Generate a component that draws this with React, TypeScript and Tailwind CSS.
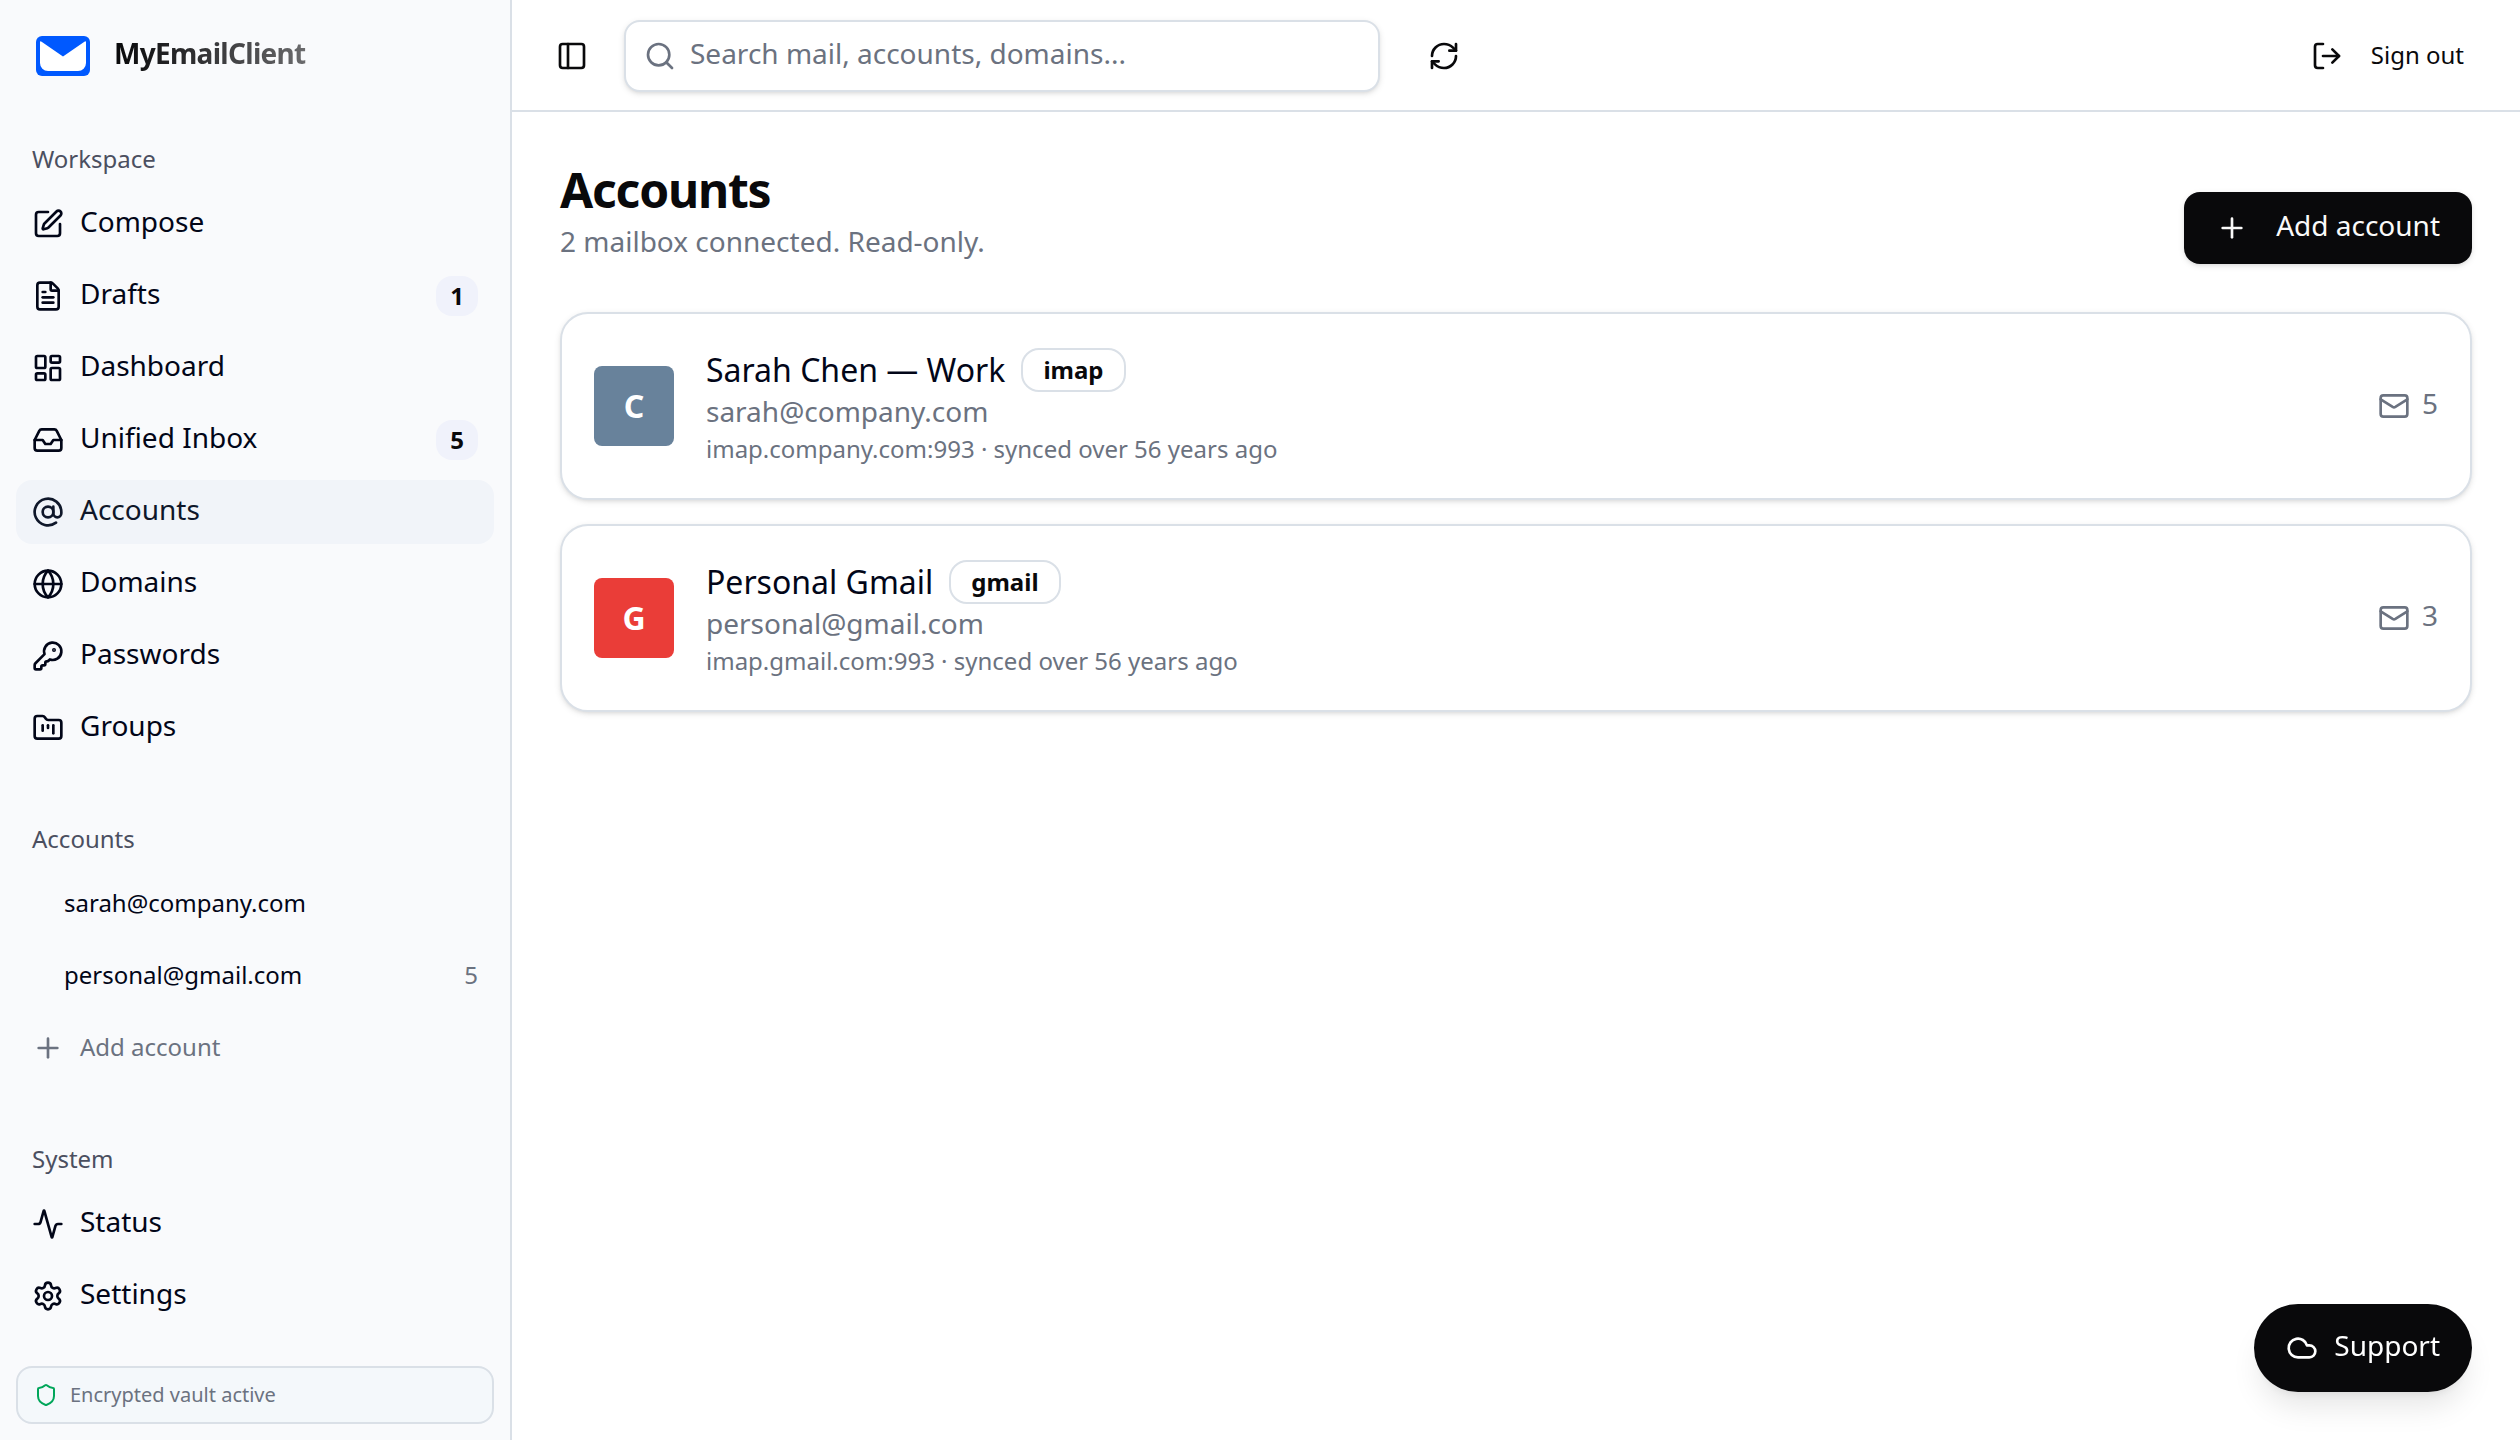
import type { ReactNode } from "react";
import {
  Activity,
  AtSign,
  Cloud,
  FileText,
  FolderKanban,
  Globe,
  Inbox,
  KeyRound,
  LayoutDashboard,
  LogOut,
  Mail,
  PanelLeft,
  Plus,
  RefreshCw,
  Search,
  Settings,
  Shield,
  SquarePen,
  type LucideIcon,
} from "lucide-react";
import clsx from "clsx";

type NavItem = {
  label: string;
  icon: LucideIcon;
  badge?: number;
  active?: boolean;
};

type Account = {
  id: string;
  name: string;
  email: string;
  provider: string;
  server: string;
  initial: string;
  color: string;
  unread: number;
};

const workspaceItems: NavItem[] = [
  { label: "Compose", icon: SquarePen },
  { label: "Drafts", icon: FileText, badge: 1 },
  { label: "Dashboard", icon: LayoutDashboard },
  { label: "Unified Inbox", icon: Inbox, badge: 5 },
  { label: "Accounts", icon: AtSign, active: true },
  { label: "Domains", icon: Globe },
  { label: "Passwords", icon: KeyRound },
  { label: "Groups", icon: FolderKanban },
];

const systemItems: NavItem[] = [
  { label: "Status", icon: Activity },
  { label: "Settings", icon: Settings },
];

const sidebarAccounts = [
  { email: "sarah@company.com", unread: 0 },
  { email: "personal@gmail.com", unread: 5 },
];

const accounts: Account[] = [
  {
    id: "work",
    name: "Sarah Chen — Work",
    email: "sarah@company.com",
    provider: "imap",
    server: "imap.company.com:993",
    initial: "C",
    color: "bg-[#68829b]",
    unread: 5,
  },
  {
    id: "gmail",
    name: "Personal Gmail",
    email: "personal@gmail.com",
    provider: "gmail",
    server: "imap.gmail.com:993",
    initial: "G",
    color: "bg-[#ea3d38]",
    unread: 3,
  },
];

// shared text styles
const bodyText = "text-[28px] leading-[34px] pb-1.5";
const smallText = "text-2xl leading-[30px] pb-0.5";
const cardShadow = "shadow-[0_2px_6px_rgba(0,0,0,0.1),0_2px_4px_-2px_rgba(0,0,0,0.1)]";

function Logo() {
  return (
    <svg viewBox="0 0 54 40" className="w-[54px] h-10 shrink-0" aria-hidden="true">
      <rect width="54" height="40" rx="6" fill="#0059ff" />
      <path
        d="M4 6.2 Q4 4.6 5.6 5.7 L27 20.5 L48.4 5.7 Q50 4.6 50 6.2 V27 a8 8 0 0 1 -8 8 H12 a8 8 0 0 1 -8 -8 Z"
        fill="#fff"
      />
    </svg>
  );
}

function NavGroup({ title, children }: { title: string; children: ReactNode }) {
  return (
    <section className="p-4">
      <h2 className="flex h-16 items-center px-4 text-[#4b4f60]">
        <span className={smallText}>{title}</span>
      </h2>
      <ul className="flex flex-col gap-2">{children}</ul>
    </section>
  );
}

function NavLink({ item }: { item: NavItem }) {
  const Icon = item.icon;

  return (
    <li>
      <a
        href="#"
        aria-current={item.active ? "page" : undefined}
        className={clsx(
          "flex h-16 items-center gap-4 rounded-2xl px-4",
          item.active ? "bg-[#f1f4f9] text-[#0f172a]" : "text-[#020618]"
        )}
      >
        <Icon size={32} className="shrink-0" />
        <span className={clsx("flex-1", bodyText)}>{item.label}</span>
        {item.badge && (
          <span className="rounded-2xl bg-[#f0f2fb] px-[14px] py-1 text-2xl font-bold text-[#09090b]">
            {item.badge}
          </span>
        )}
      </a>
    </li>
  );
}

function Sidebar() {
  return (
    <aside className="flex w-[512px] shrink-0 flex-col border-r-2 border-[#dae0e7] bg-[#f9fafc]">
      <div className="flex h-28 items-center gap-6 px-9">
        <Logo />
        <span
          className={clsx(
            "bg-linear-to-r from-[#09090b] to-[#6b6b6d] bg-clip-text font-bold tracking-tight text-transparent",
            bodyText
          )}
        >
          MyEmailClient
        </span>
      </div>

      <nav className="flex flex-1 flex-col gap-4">
        <NavGroup title="Workspace">
          {workspaceItems.map((item) => (
            <NavLink key={item.label} item={item} />
          ))}
        </NavGroup>

        <NavGroup title="Accounts">
          {sidebarAccounts.map((account) => (
            <li key={account.email}>
              <a href="#" className="flex h-16 items-center justify-between pl-12 pr-4 text-[#020618]">
                <span className={smallText}>{account.email}</span>
                {account.unread > 0 && (
                  <span className={clsx("text-[#6b7280]", smallText)}>{account.unread}</span>
                )}
              </a>
            </li>
          ))}
          <li>
            <a href="#" className="flex h-16 items-center gap-4 px-4 text-[#6b7280]">
              <Plus size={32} />
              <span className={smallText}>Add account</span>
            </a>
          </li>
        </NavGroup>

        <NavGroup title="System">
          {systemItems.map((item) => (
            <NavLink key={item.label} item={item} />
          ))}
        </NavGroup>
      </nav>

      <div className="p-4">
        <div className="flex items-center gap-3 rounded-2xl border-2 border-[#dae0e7] bg-[#f4f8fb] px-4 py-3 text-xl leading-[30px] text-[#6b7280]">
          <Shield size={24} className="text-[#00a65a]" />
          Encrypted vault active
        </div>
      </div>
    </aside>
  );
}

function TopBar() {
  return (
    <header className="flex h-28 items-center border-b-2 border-[#dae0e7] px-7 pt-0.5">
      <button type="button" aria-label="Toggle sidebar" className="flex size-16 items-center justify-center">
        <PanelLeft size={32} />
      </button>
      <label
        className={clsx(
          "ml-5 flex h-[72px] w-[30vw] items-center gap-[14px] rounded-2xl border-2 border-[#dae0e7] bg-white px-[18px]",
          cardShadow
        )}
      >
        <Search size={32} className="shrink-0 text-[#6b7280]" />
        <input
          type="search"
          aria-label="Search"
          placeholder="Search mail, accounts, domains..."
          className={clsx("w-full bg-transparent outline-none placeholder:text-[#6b7280]", bodyText)}
        />
      </label>
      <button type="button" aria-label="Refresh" className="ml-8 flex size-16 items-center justify-center">
        <RefreshCw size={32} />
      </button>
      <button type="button" className="ml-auto flex h-16 items-center gap-7 px-7">
        <LogOut size={32} />
        <span className={smallText}>Sign out</span>
      </button>
    </header>
  );
}

function AccountCard({ account }: { account: Account }) {
  return (
    <li
      className={clsx(
        "flex items-center gap-8 rounded-[28px] border-2 border-[#dae0e7] bg-white p-8",
        cardShadow
      )}
    >
      <div
        className={clsx(
          "flex size-20 shrink-0 items-center justify-center rounded-lg text-[32px] font-bold text-white",
          account.color
        )}
      >
        {account.initial}
      </div>
      <div className="min-w-0 flex-1">
        <div className="flex h-12 items-center gap-4">
          <h2 className="text-[32px] leading-12 text-[#020618]">{account.name}</h2>
          <span className="rounded-[18px] border-2 border-[#dae0e7] px-5 py-1 text-2xl font-bold text-[#09090b]">
            {account.provider}
          </span>
        </div>
        <p className={clsx("text-[#6b7280]", bodyText)}>{account.email}</p>
        <p className={clsx("text-[#6b7280]", smallText)}>{account.server} · synced over 56 years ago</p>
      </div>
      <div className="flex items-center gap-3 text-[#6b7280]">
        <Mail size={32} />
        <span className={bodyText}>{account.unread}</span>
      </div>
    </li>
  );
}

export default function App() {
  return (
    <div className="flex min-h-screen bg-white font-['Noto_Sans',sans-serif] text-[#09090b]">
      <Sidebar />

      <div className="min-w-0 flex-1">
        <TopBar />
        <main className="flex flex-col gap-12 p-12">
          <div className="flex items-end justify-between">
            <div>
              <h1 className="pb-1 text-5xl leading-15 font-bold tracking-tight">Accounts</h1>
              <p className={clsx("text-[#6b7280]", bodyText)}>{accounts.length} mailbox connected. Read-only.</p>
            </div>
            <button
              type="button"
              className={clsx("flex h-[72px] items-center gap-7 rounded-2xl bg-[#09090b] px-8 text-[#fafafa]", cardShadow)}
            >
              <Plus size={32} />
              <span className={bodyText}>Add account</span>
            </button>
          </div>

          <ul className="flex flex-col gap-6">
            {accounts.map((account) => (
              <AccountCard key={account.id} account={account} />
            ))}
          </ul>
        </main>
      </div>

      {/* floating support button */}
      <button
        type="button"
        className="fixed bottom-12 right-12 flex h-22 items-center gap-4 rounded-full bg-[#09090b] px-8 text-white shadow-[0_20px_30px_-6px_rgba(9,9,11,0.1),0_8px_12px_-8px_rgba(9,9,11,0.1)]"
      >
        <Cloud size={32} />
        <span className={bodyText}>Support</span>
      </button>
    </div>
  );
}
